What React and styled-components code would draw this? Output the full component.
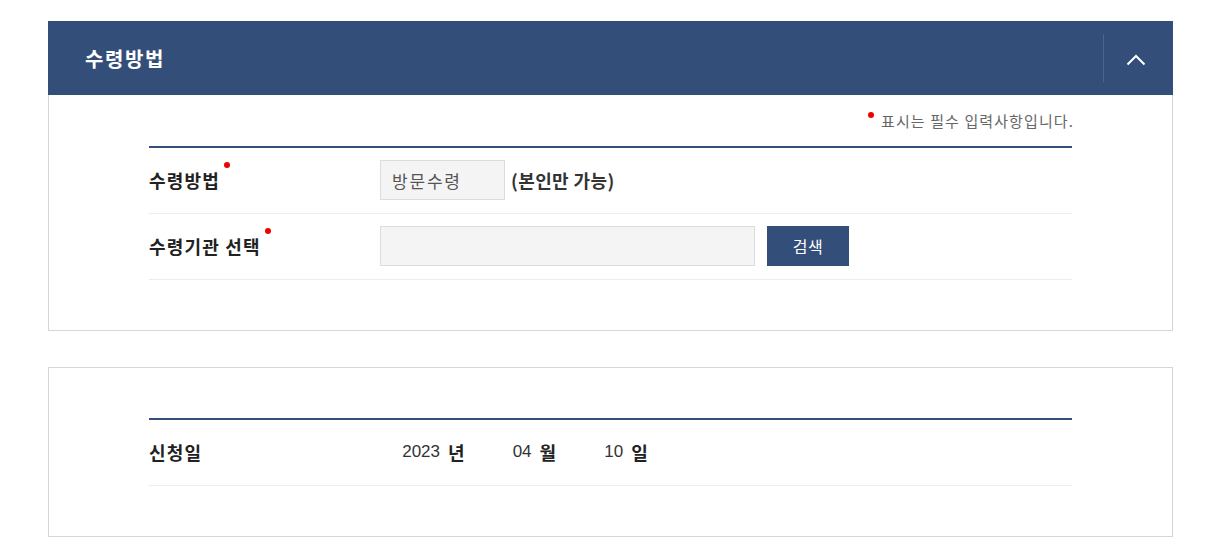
import React from "react";
import styled, { createGlobalStyle } from "styled-components";

const Global = createGlobalStyle`
  html, body { margin: 0; padding: 0; background: #fff; }
  body { font-family: "Liberation Sans", "Noto Sans CJK KR", sans-serif; color: #333; }
  * { box-sizing: border-box; }
`;

const Page = styled.div`
  padding: 21px 43px 0 48px;
  display: flex;
  flex-direction: column;
  gap: 36px;
`;

const Card = styled.section`
  border: 1px solid #d6d6d6;
  background: #fff;
`;

const Header = styled.div`
  height: 74px;
  margin: -1px -1px 0;
  background: #344e7a;
  display: flex;
  align-items: center;
  justify-content: space-between;
  padding-left: 37px;
`;

const Title = styled.h2`
  margin: 0;
  color: #fff;
  font-size: 20px;
  font-weight: 700;
  letter-spacing: 1.6px;
  font-family: "Noto Sans CJK KR", sans-serif;
`;

const ToggleButton = styled.button`
  width: 70px;
  height: 48px;
  border: 0;
  border-left: 1px solid #4b6391;
  background: transparent;
  display: flex;
  align-items: center;
  justify-content: center;
  padding: 3px 5px 0 0;
  cursor: pointer;
`;

const Body = styled.div`
  padding: ${(p) => (p.$top ? `${p.$top}px` : "0")} 100px 50px;
`;

const Notice = styled.p`
  margin: 0 -2px 15px 0;
  text-align: right;
  font-size: 15px;
  line-height: 20px;
  letter-spacing: 1.1px;
  color: #666;
  font-family: "Noto Sans CJK KR", sans-serif;
`;

const Dot = styled.span`
  display: inline-block;
  width: 6px;
  height: 6px;
  border-radius: 50%;
  background: #f00000;
  position: relative;
  top: ${(p) => p.$top || 0}px;
  margin: 0 ${(p) => p.$right || 0}px 0 ${(p) => p.$left || 0}px;
`;

const Table = styled.div`
  border-top: 2px solid #344e7a;
`;

const Row = styled.div`
  display: grid;
  grid-template-columns: 231px 1fr;
  align-items: center;
  padding: 12px 0 13px;
  border-bottom: 1px solid #ececec;
`;

const Label = styled.div`
  font-size: 18px;
  font-weight: 700;
  letter-spacing: 1.2px;
  color: #222;
  font-family: "Noto Sans CJK KR", sans-serif;
`;

const Value = styled.div`
  display: flex;
  align-items: center;
  min-height: 40px;
`;

const Field = styled.div`
  width: ${(p) => p.$w}px;
  height: 40px;
  border: 1px solid #dcdcdc;
  background: #f4f4f4;
  padding: 0 11px;
  display: flex;
  align-items: center;
  font-size: 17px;
  letter-spacing: 1.8px;
  color: #555;
  font-family: "Noto Sans CJK KR", sans-serif;
`;

const Hint = styled.span`
  margin-left: 6px;
  font-size: 18px;
  font-weight: 700;
  letter-spacing: 0.4px;
  color: #333;
  font-family: "Noto Sans CJK KR", sans-serif;
`;

const SearchButton = styled.button`
  margin-left: 12px;
  width: 82px;
  height: 40px;
  border: 0;
  background: #344e7a;
  color: #fff;
  font-size: 16px;
  letter-spacing: 0.5px;
  font-family: "Noto Sans CJK KR", sans-serif;
  cursor: pointer;
`;

const DateGroup = styled.span`
  display: inline-flex;
  align-items: center;
  margin-right: 7px;
`;

const Num = styled.span`
  width: 60px;
  text-align: right;
  font-size: 17px;
  color: #333;
  font-family: "Liberation Sans", sans-serif;
`;

const Unit = styled.span`
  margin-left: 8px;
  font-size: 18px;
  font-weight: 700;
  color: #222;
  font-family: "Noto Sans CJK KR", sans-serif;
`;

const Chevron = () => (
  <svg width="20" height="12" viewBox="0 0 20 12" fill="none">
    <path d="M1.5 10.5 L10 2 L18.5 10.5" stroke="#fff" strokeWidth="2" />
  </svg>
);

export default function App() {
  return (
    <>
      <Global />
      <Page>
        <Card>
          <Header>
            <Title>수령방법</Title>
            <ToggleButton aria-label="접기">
              <Chevron />
            </ToggleButton>
          </Header>
          <Body $top={16}>
            <Notice>
              <Dot $top={-9} $right={7} />
              표시는 필수 입력사항입니다.
            </Notice>
            <Table>
              <Row>
                <Label>
                  수령방법
                  <Dot $top={-20} $left={4} />
                </Label>
                <Value>
                  <Field $w={125}>방문수령</Field>
                  <Hint>(본인만 가능)</Hint>
                </Value>
              </Row>
              <Row>
                <Label>
                  수령기관 선택
                  <Dot $top={-20} $left={4} />
                </Label>
                <Value>
                  <Field $w={375} />
                  <SearchButton>검색</SearchButton>
                </Value>
              </Row>
            </Table>
          </Body>
        </Card>
        <Card>
          <Body $top={50}>
            <Table>
              <Row>
                <Label>신청일</Label>
                <Value>
                  <DateGroup>
                    <Num>2023</Num>
                    <Unit>년</Unit>
                  </DateGroup>
                  <DateGroup>
                    <Num>04</Num>
                    <Unit>월</Unit>
                  </DateGroup>
                  <DateGroup>
                    <Num>10</Num>
                    <Unit>일</Unit>
                  </DateGroup>
                </Value>
              </Row>
            </Table>
          </Body>
        </Card>
      </Page>
    </>
  );
}
